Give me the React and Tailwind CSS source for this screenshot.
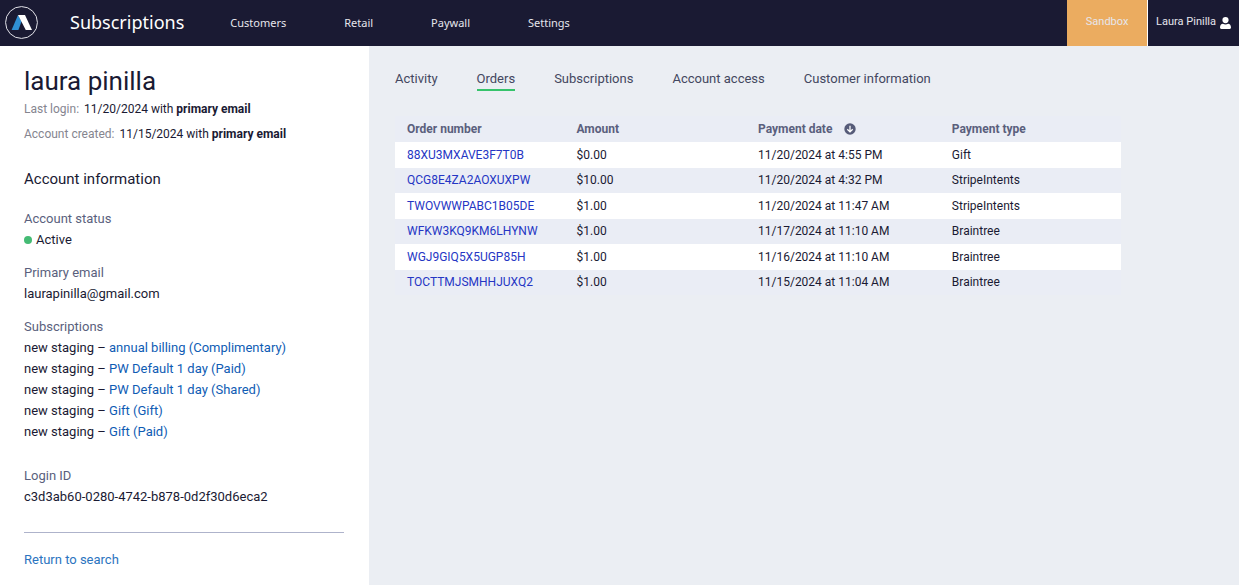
import React from "react";

const NAV = ["Customers", "Retail", "Paywall", "Settings"];

const TABS = ["Activity", "Orders", "Subscriptions", "Account access", "Customer information"];

const SUBSCRIPTIONS = [
  "annual billing (Complimentary)",
  "PW Default 1 day (Paid)",
  "PW Default 1 day (Shared)",
  "Gift (Gift)",
  "Gift (Paid)",
];

const ORDERS = [
  ["88XU3MXAVE3F7T0B", "$0.00", "11/20/2024 at 4:55 PM", "Gift"],
  ["QCG8E4ZA2AOXUXPW", "$10.00", "11/20/2024 at 4:32 PM", "StripeIntents"],
  ["TWOVWWPABC1B05DE", "$1.00", "11/20/2024 at 11:47 AM", "StripeIntents"],
  ["WFKW3KQ9KM6LHYNW", "$1.00", "11/17/2024 at 11:10 AM", "Braintree"],
  ["WGJ9GIQ5X5UGP85H", "$1.00", "11/16/2024 at 11:10 AM", "Braintree"],
  ["TOCTTMJSMHHJUXQ2", "$1.00", "11/15/2024 at 11:04 AM", "Braintree"],
];

function Logo() {
  return (
    <svg viewBox="0 0 34 34" className="size-[33px]" aria-hidden="true">
      <circle cx="17" cy="17" r="16.4" fill="none" stroke="#e8e8ee" strokeWidth="1" />
      <path d="M13.4 9.4 17 16 13.8 24.6H6.8Z" fill="#2f8fd3" />
      <path d="M13.4 9.4h7.2l7.2 15.2h-6.4Z" fill="#fff" />
    </svg>
  );
}

function PersonIcon() {
  return (
    <svg viewBox="0 0 11 12" className="h-3 w-[11px]" fill="#fff" aria-hidden="true">
      <circle cx="5.5" cy="3.1" r="3.1" />
      <path d="M0 10.6C0 8.3 1.2 7 2.9 6.8c.8.5 1.6.8 2.6.8s1.8-.3 2.6-.8C9.8 7 11 8.3 11 10.6c0 .8-.5 1.4-1.3 1.4H1.3C.5 12 0 11.4 0 10.6Z" />
    </svg>
  );
}

function SortIcon() {
  return (
    <svg viewBox="0 0 12 12" className="size-3" aria-hidden="true">
      <circle cx="6" cy="6" r="5.7" fill="#565b78" />
      <path d="M6 2.8v6M3.3 6.2 6 8.9l2.7-2.7" fill="none" stroke="#fff" strokeWidth="1.3" />
    </svg>
  );
}

function Field({ label, children, className }) {
  return (
    <div className={className}>
      <dt className="text-[#5a5f7d]">{label}</dt>
      <dd>{children}</dd>
    </div>
  );
}

export default function App() {
  return (
    <div className="flex min-h-screen flex-col bg-[#ebeef3] font-[Roboto,sans-serif] text-[#1a1a33]">
      <header className="flex h-[46px] bg-[#1a1a33] text-[#e6e6ec]">
        <a href="#home" aria-label="Home" className="flex items-center pb-px pl-[5px]">
          <Logo />
        </a>
        <span className="pt-2 pl-8 font-['Noto_Sans',sans-serif] text-lg leading-7 text-white">Subscriptions</span>
        <nav className="flex flex-1 items-center gap-[58px] pl-[46px] font-['Noto_Sans',sans-serif] text-[11px]">
          {NAV.map((item) => (
            <a key={item} href={"#" + item.toLowerCase()}>
              {item}
            </a>
          ))}
        </nav>
        <div className="flex w-[81px] items-center justify-center border-r border-white bg-[#ebac60] pb-px text-[11px]">
          Sandbox
        </div>
        <button type="button" className="flex items-center gap-1 pr-2 pb-px pl-2 text-[11px]">
          Laura Pinilla
          <PersonIcon />
        </button>
      </header>

      <div className="flex flex-1">
        <aside className="w-[369px] shrink-0 bg-white pt-[17px] pr-[25px] pb-4 pl-6 text-[13px] leading-[21px]">
          <h1 className="text-[26px] leading-9">laura pinilla</h1>
          <div className="flex flex-col gap-[5px] text-xs leading-5">
            <p>
              <span className="mr-[5px] text-[#85858f]">Last login:</span>
              11/20/2024 with <strong>primary email</strong>
            </p>
            <p>
              <span className="mr-[5px] text-[#85858f]">Account created:</span>
              11/15/2024 with <strong>primary email</strong>
            </p>
          </div>
          <h2 className="mt-[23px] text-[15px] leading-6">Account information</h2>
          <dl className="mt-[17px] flex flex-col gap-3">
            <Field label="Account status">
              <span className="flex items-center gap-1">
                <span className="size-2 rounded-full bg-[#45bb74]" />
                Active
              </span>
            </Field>
            <Field label="Primary email">laurapinilla@gmail.com</Field>
            <Field label="Subscriptions">
              <ul>
                {SUBSCRIPTIONS.map((name) => (
                  <li key={name}>
                    new staging –{" "}
                    <a href="#subscription" className="text-[#0f5cb4]">
                      {name}
                    </a>
                  </li>
                ))}
              </ul>
            </Field>
            <Field label="Login ID" className="pt-[11px]">
              c3d3ab60-0280-4742-b878-0d2f30d6eca2
            </Field>
          </dl>
          <hr className="mt-[25px] mb-4 border-[#aeb3cb]" />
          <a href="#search" className="text-[#2b74c0]">
            Return to search
          </a>
        </aside>

        <main className="min-w-0 flex-1 pt-[22px] pr-[118px] pl-[26px]">
          <nav className="flex gap-[39px] text-[13px] leading-[21px] text-[#43475f]">
            {TABS.map((tab) => (
              <a
                key={tab}
                href="#tab"
                aria-current={tab === "Orders" ? "page" : undefined}
                className="border-b-2 border-transparent aria-[current=page]:border-[#36c36b]"
              >
                {tab}
              </a>
            ))}
          </nav>
          <table className="mt-[25px] w-full table-fixed border-collapse bg-[#eaedf5] text-left text-xs leading-4">
            <colgroup>
              <col className="w-[25%]" />
              <col className="w-[25%]" />
              <col className="w-[26.7%]" />
              <col className="w-[23.3%]" />
            </colgroup>
            <thead>
              <tr className="h-[26px] text-[#5a5f7d]">
                <th className="pl-3">Order number</th>
                <th>Amount</th>
                <th>
                  <button type="button" className="flex items-center gap-3 font-bold">
                    Payment date
                    <SortIcon />
                  </button>
                </th>
                <th>Payment type</th>
              </tr>
            </thead>
            <tbody>
              {ORDERS.map(([number, amount, date, type]) => (
                <tr key={number} className="h-[25px] odd:h-[26px] odd:bg-white [&>td]:pb-px">
                  <td className="pl-3">
                    <a href="#order" className="text-[#2536c4]">
                      {number}
                    </a>
                  </td>
                  <td>{amount}</td>
                  <td>{date}</td>
                  <td>{type}</td>
                </tr>
              ))}
            </tbody>
          </table>
        </main>
      </div>
    </div>
  );
}
